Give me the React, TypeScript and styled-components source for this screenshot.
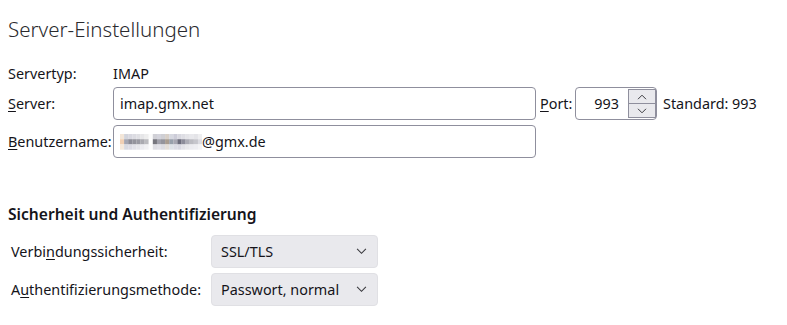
import { FC, ReactNode } from 'react';
import styled, { createGlobalStyle } from 'styled-components';

const GlobalStyle = createGlobalStyle`
  html, body {
    margin: 0;
    padding: 0;
    background: #ffffff;
  }
  body {
    font-family: 'Noto Sans', 'Open Sans', sans-serif;
    font-size: 14.4px;
    color: #15141a;
  }
`;

// pixelated (blurred) user name, 3 rows of blocks
const BLUR_ROWS = [
  ['#f3e6d8', '#d2d4dc', '#d8d8e0', '#dcdce2', '#e0e0e4', '#e6e6e8', '#eeeeee', '#fbfbfb', '#d0d0d6', '#d4d4dc', '#cfcfd4', '#d8d0c8', '#d6d8e0', '#ccccd8', '#d8d8e0', '#dedee4', '#e4e4e8', '#e8e8ec', '#e4e4e8', '#eeeef0'],
  ['#f1d0b4', '#a4a6b2', '#8c8c96', '#94949c', '#9a9aa2', '#aaaab0', '#bcbcc0', '#ffffff', '#76767e', '#a0a0aa', '#94949c', '#a89c90', '#98a0ac', '#a6a6b2', '#6c6c7c', '#8c8c9a', '#acacb6', '#bcbcc2', '#c6c6cc', '#dcdce2'],
  ['#f6eadc', '#d8dae2', '#dcdce4', '#e2e2e8', '#e6e6ea', '#ececf0', '#f2f2f4', '#fcfcfc', '#dedee4', '#e2e2e8', '#dcdce2', '#e4ded8', '#dee2e8', '#dcdce6', '#d8d8e2', '#e2e2e8', '#e8e8ec', '#ececf0', '#eeeef2', '#f4f4f6'],
];

const BlurredName: FC = () => (
  <BlurSvg width="82" height="16" viewBox="0 0 82 16">
    {BLUR_ROWS.map((row, r) =>
      row.map((c, i) => <rect key={`${r}-${i}`} x={i * 4.1} y={r * 5.2} width="4.2" height="5.3" fill={c} />),
    )}
  </BlurSvg>
);

const Chevron: FC<{ up?: boolean; size?: number }> = ({ up, size = 10 }) => (
  <svg width={size} height={size * 0.6} viewBox="0 0 10 6" style={{ display: 'block' }}>
    <path d={up ? 'M1 5.2 L5 1.2 L9 5.2' : 'M1 0.8 L5 4.8 L9 0.8'} fill="none" stroke="#3a3a3f" strokeWidth="1" />
  </svg>
);

const AccessKey: FC<{ children: ReactNode }> = ({ children }) => <Key>{children}</Key>;

const App: FC = () => (
  <>
    <GlobalStyle />
    <Page>
      <Heading>Server-Einstellungen</Heading>

      <InfoRow>
        <Label>Servertyp:</Label>
        <Value>IMAP</Value>
      </InfoRow>

      <FieldRow>
        <Label>
          <AccessKey>S</AccessKey>erver:
        </Label>
        <TextBox>imap.gmx.net</TextBox>
        <PortLabel>
          <AccessKey>P</AccessKey>ort:
        </PortLabel>
        <PortBox>
          <PortValue>993</PortValue>
          <Spinner>
            <SpinButton>
              <Chevron up />
            </SpinButton>
            <SpinButton $bottom>
              <Chevron />
            </SpinButton>
          </Spinner>
        </PortBox>
        <Hint>Standard: 993</Hint>
      </FieldRow>

      <FieldRow $gap={5}>
        <Label>
          <AccessKey>B</AccessKey>enutzername:
        </Label>
        <TextBox>
          <BlurredName />
          <span>@gmx.de</span>
        </TextBox>
      </FieldRow>

      <SectionTitle>Sicherheit und Authentifizierung</SectionTitle>

      <SelectRow>
        <SelectLabel>
          Verbi<AccessKey>n</AccessKey>dungssicherheit:
        </SelectLabel>
        <SelectBox>
          <span>SSL/TLS</span>
          <Chevron size={11} />
        </SelectBox>
      </SelectRow>

      <SelectRow $gap={5}>
        <SelectLabel>
          A<AccessKey>u</AccessKey>thentifizierungsmethode:
        </SelectLabel>
        <SelectBox>
          <span>Passwort, normal</span>
          <Chevron size={11} />
        </SelectBox>
      </SelectRow>
    </Page>
  </>
);

const Page = styled.div`
  width: 787px;
  height: 325px;
  box-sizing: border-box;
  padding: 13px 0 0 8px;
  overflow: hidden;
`;

const Heading = styled.h1`
  margin: 0 0 17px;
  font-size: 20.5px;
  font-weight: 300;
  line-height: 32px;
  color: #2a2a2e;
`;

const Key = styled.span`
  text-decoration: underline;
  text-underline-offset: 2px;
`;

const BlurSvg = styled.svg`
  display: block;
  flex: none;
`;

const InfoRow = styled.div`
  display: flex;
  align-items: center;
  height: 22px;
`;

const Label = styled.div`
  width: 105px;
  flex: none;
  white-space: nowrap;
`;

const Value = styled.div`
  white-space: nowrap;
`;

const FieldRow = styled.div<{ $gap?: number }>`
  display: flex;
  align-items: center;
  height: 33px;
  margin-top: ${({ $gap }) => $gap ?? 3}px;
`;

const TextBox = styled.div`
  box-sizing: border-box;
  width: 423px;
  height: 33px;
  flex: none;
  display: flex;
  align-items: center;
  gap: 0;
  padding: 0 8px 0 6px;
  border: 1px solid #8f8f9d;
  border-radius: 4px;
  background: #ffffff;
  white-space: nowrap;
`;

const PortLabel = styled.div`
  margin-left: 4px;
  width: 35px;
  flex: none;
`;

const PortBox = styled.div`
  box-sizing: border-box;
  width: 82px;
  height: 33px;
  display: flex;
  align-items: stretch;
  border: 1px solid #8f8f9d;
  border-radius: 4px;
  padding: 1px 0 1px 0;
`;

const PortValue = styled.div`
  flex: 1;
  display: flex;
  align-items: center;
  justify-content: flex-end;
  padding-right: 9px;
`;

const Spinner = styled.div`
  width: 28px;
  display: flex;
  flex-direction: column;
`;

const SpinButton = styled.div<{ $bottom?: boolean }>`
  flex: 1;
  display: flex;
  align-items: center;
  justify-content: center;
  background: #e9e9ed;
  border: 1px solid #8f8f9d;
  border-top-width: ${({ $bottom }) => ($bottom ? 0 : 1)}px;
`;

const Hint = styled.div`
  margin-left: 6px;
  white-space: nowrap;
`;

const SectionTitle = styled.h2`
  margin: 45px 0 0;
  font-size: 15.6px;
  font-weight: 600;
  line-height: 22px;
`;

const SelectRow = styled.div<{ $gap?: number }>`
  display: flex;
  align-items: center;
  padding-left: 3px;
  margin-top: ${({ $gap }) => $gap ?? 10}px;
`;

const SelectLabel = styled.div`
  width: 200px;
  flex: none;
  white-space: nowrap;
`;

const SelectBox = styled.div`
  box-sizing: border-box;
  width: 167px;
  height: 33px;
  display: flex;
  align-items: center;
  justify-content: space-between;
  padding: 0 10px 0 9px;
  border-radius: 4px;
  border: 1px solid #e0e0e4;
  background: #e9e9ed;
  white-space: nowrap;
`;

export default App;
